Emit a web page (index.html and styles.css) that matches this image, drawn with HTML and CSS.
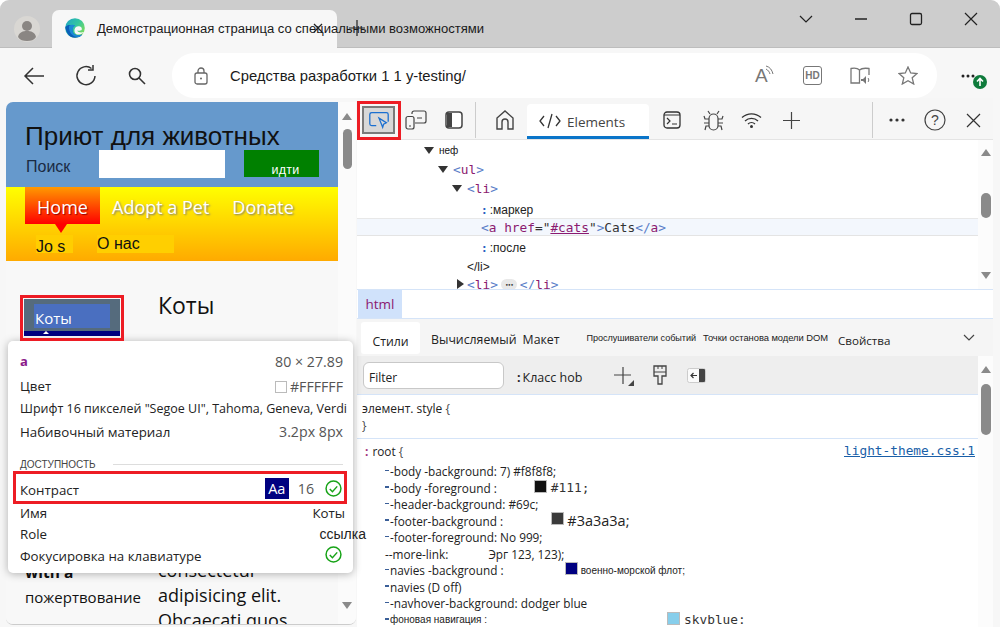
FILE: index.html
```html
<!DOCTYPE html>
<html lang="ru">
<head>
<meta charset="utf-8">
<title>Демонстрационная страница</title>
<link rel="stylesheet" href="styles.css">
</head>
<body>
<div class="window">
  <header class="tabstrip">
    <div class="avatar"><svg width="26" height="26" viewBox="0 0 26 26"><circle cx="13" cy="13" r="13" fill="#d9d7d3"/><circle cx="13" cy="10" r="5" fill="#8a8683"/><path d="M4 21c1-5 5-6 9-6s8 1 9 6c-2 3-5 4-9 4s-7-1-9-4z" fill="#8a8683"/></svg></div>
    <div class="tab">
      <svg class="edge" width="20" height="20" viewBox="0 0 20 20"><defs><linearGradient id="eg" x1="0" y1="0" x2="1" y2=".7"><stop offset="0" stop-color="#1fa3c8"/><stop offset=".55" stop-color="#33c6a0"/><stop offset="1" stop-color="#7fdc5a"/></linearGradient></defs><circle cx="10" cy="10" r="9.800" fill="url(#eg)"/><path d="M.3 9C1 14 3.500 19.800 10 19.800c3 0 5.500-1.200 7.200-3.300-4 1.500-9 .5-9.700-3.500C7 10 8 8.500 10 7.500 6 6.500 1.500 6.500.3 9z" fill="#0b5fb8"/><path d="M4 8c2-1.500 5-1.500 6-.5-1.500 1-2.500 2.500-2.500 5.500.7 4 5.700 5 9.700 3.500-1 1.200-2 2-3 2.500-6 1-11-5-10.200-11z" fill="#1c8ad6"/><path d="M9.500 11.500c.5-2.500 3-3.800 5.500-3 1.500.5 2.200 1.800 1.700 3.500-1 .8-3.500 1-4.700.5 1 2 4.500 2.500 7.500 1.200-.5 1-4.500 3.500-7.500 2.800-2-.5-3-3-2.500-5z" fill="#f7f7f7"/></svg>
      <span class="tab-title">Демонстрационная страница со специальными возможностями</span>
      <svg class="tab-x" width="12" height="12" viewBox="0 0 12 12"><path d="M2 2l8 8M10 2l-8 8" stroke="#222" stroke-width="1.300"/></svg>
    </div>
    <svg class="tab-plus" width="16" height="16" viewBox="0 0 16 16"><path d="M8 0v16M0 8h16" stroke="#222" stroke-width="1.200"/></svg>
    <div class="winctl">
      <svg class="ctl" width="14" height="14" viewBox="0 0 14 14"><path d="M1 4l6 6 6-6" fill="none" stroke="#222" stroke-width="1.200"/></svg>
      <svg class="ctl" width="14" height="14" viewBox="0 0 14 14"><path d="M1 7h12" stroke="#222" stroke-width="1.300"/></svg>
      <svg class="ctl" width="14" height="14" viewBox="0 0 14 14"><rect x="1.500" y="1.500" width="11" height="11" rx="1.500" fill="none" stroke="#222" stroke-width="1.300"/></svg>
      <svg class="ctl" width="14" height="14" viewBox="0 0 14 14"><path d="M1 1l12 12M13 1L1 13" stroke="#222" stroke-width="1.200"/></svg>
    </div>
  </header>

  <nav class="toolbar">
    <svg class="tb back" width="22" height="18" viewBox="0 0 22 18"><path d="M10 1L2 9l8 8M2 9h19" fill="none" stroke="#333" stroke-width="1.500"/></svg>
    <svg class="tb reload" width="22" height="22" viewBox="0 0 22 22"><path d="M16.500 3.500A9 9 0 1 0 20 11" fill="none" stroke="#333" stroke-width="1.500"/><path d="M13 5h5V0" fill="none" stroke="#333" stroke-width="1.500"/></svg>
    <svg class="tb search" width="18" height="18" viewBox="0 0 18 18"><circle cx="7" cy="7" r="5.500" fill="none" stroke="#333" stroke-width="1.600"/><path d="M11 11l6 6" stroke="#333" stroke-width="1.600"/></svg>
    <div class="address">
      <svg class="lock" width="14" height="18" viewBox="0 0 14 18"><rect x="1" y="6" width="12" height="11" rx="2" fill="none" stroke="#666" stroke-width="1.300"/><path d="M4 6V4a3 3 0 0 1 6 0v2" fill="none" stroke="#666" stroke-width="1.300"/><circle cx="7" cy="11.500" r="1" fill="#666"/></svg>
      <span class="url">Средства разработки 1 1 y-testing/</span>
      <div class="addr-icons">
        <span class="read"><span class="read-a">A</span><svg width="10" height="12" viewBox="0 0 10 12"><path d="M1 1c4 1 6 4 7 8M1 4c2 1 3.500 3 4 5" fill="none" stroke="#777" stroke-width="1"/></svg></span>
        <span class="hd">HD</span>
        <svg class="ai" width="20" height="18" viewBox="0 0 20 18"><path d="M9.500 3C8 1.500 4 1 1 1.500V16H9.500zM9.500 3C11 1.500 15 1 19 1.500V8" fill="none" stroke="#777" stroke-width="1.300"/><path d="M11 12h2l3-3v8l-3-3h-2z" fill="#777"/><path d="M18 11c1 1 1 3 0 4" fill="none" stroke="#777"/></svg>
        <svg class="ai" width="20" height="19" viewBox="0 0 20 19"><path d="M10 1l2.700 6 6.300.6-4.800 4.200 1.500 6.200-5.700-3.300L4.300 18l1.500-6.200L1 7.600 7.300 7z" fill="none" stroke="#777" stroke-width="1.300"/></svg>
      </div>
    </div>
    <div class="more"><svg class="dots" width="14" height="4" viewBox="0 0 14 4"><circle cx="2" cy="2" r="1.500" fill="#222"/><circle cx="7" cy="2" r="1.500" fill="#222"/><circle cx="12" cy="2" r="1.500" fill="#222"/></svg><span class="update"><svg width="12" height="12" viewBox="0 0 12 12"><path d="M6 10V3M3 5.500L6 2.500l3 3" fill="none" stroke="#fff" stroke-width="1.600"/></svg></span></div>
  </nav>

  <div class="content">
    <section class="page">
      <div class="page-view">
        <div class="site-header">
          <h1 class="site-title">Приют для животных</h1>
          <div class="search-row">
            <span class="search-label">Поиск</span>
            <span class="search-input"></span>
            <span class="search-btn">идти</span>
          </div>
        </div>
        <div class="site-nav">
          <div class="nav-main">
            <span class="nav-home">Home</span>
            <span class="nav-link nav-adopt">Adopt a Pet</span>
            <span class="nav-link">Donate</span>
          </div>
          <div class="nav-sub">
            <span class="sub-a">Jo s</span>
            <span class="sub-b">О нас</span>
          </div>
        </div>
        <div class="site-main">
          <aside class="side">
            <div class="cats-box"><span class="cats-link">Коты</span></div>
            <div class="side-low"><b class="bold-low">with a</b><span class="donate-low">пожертвование</span></div>
          </aside>
          <div class="article">
            <h2 class="article-h">Коты</h2>
            <p class="article-p">consectetur<br>adipisicing elit.<br>Obcaecati quos</p>
          </div>
        </div>
      </div>
      <div class="page-scroll">
        <span class="arr-up"></span>
        <span class="thumb"></span>
        <span class="arr-down"></span>
      </div>
    </section>

    <section class="devtools">
      <div class="dt-bar">
        <span class="dt-inspect"><svg width="24" height="22" viewBox="0 0 24 22"><path d="M9 17H4a2 2 0 0 1-2-2V5a2 2 0 0 1 2-2h16a2 2 0 0 1 2 2v8" fill="none" stroke="#1a6fd0" stroke-width="1.400"/><path d="M12 9l8 5-3 1.500L16 19z" fill="none" stroke="#1a6fd0" stroke-width="1.400"/></svg></span>
        <svg class="dt-i dt-device" width="22" height="20" viewBox="0 0 22 20"><path d="M7 4V3a2 2 0 0 1 2-2h10a2 2 0 0 1 2 2v8a2 2 0 0 1-2 2h-9" fill="none" stroke="#444" stroke-width="1.200"/><rect x="1" y="6.500" width="8" height="12.500" rx="2" fill="none" stroke="#444" stroke-width="1.200"/><path d="M12 8h5M4 16h2" stroke="#444"/></svg>
        <svg class="dt-i dt-dock" width="18" height="18" viewBox="0 0 18 18"><rect x="1" y="1" width="16" height="16" rx="3" fill="#fff" stroke="#444" stroke-width="1.500"/><path d="M2 2h5v14H2z" fill="#444"/></svg>
        <span class="dt-sep"></span>
        <svg class="dt-i dt-home" width="20" height="20" viewBox="0 0 20 20"><path d="M2 19V8l8-7 8 7v11h-5v-7a3 3 0 0 0-6 0v7z" fill="none" stroke="#444" stroke-width="1.400"/></svg>
        <div class="dt-tab">
          <svg width="22" height="16" viewBox="0 0 22 16"><path d="M5 3L1 8l4 5M17 3l4 5-4 5M13 1L9 15" fill="none" stroke="#333" stroke-width="1.300"/></svg>
          <span class="dt-tab-label">Elements</span>
        </div>
        <svg class="dt-i dt-console" width="18" height="18" viewBox="0 0 18 18"><rect x="1" y="1" width="16" height="16" rx="3" fill="none" stroke="#333" stroke-width="1.300"/><path d="M1 4h16" stroke="#333"/><path d="M4 7l3 3-3 3M9 13h5" fill="none" stroke="#333" stroke-width="1.200"/></svg>
        <svg class="dt-i dt-bug" width="21" height="21" viewBox="0 0 21 21"><rect x="6" y="4" width="9" height="16" rx="4.500" fill="none" stroke="#444" stroke-width="1.200"/><path d="M6 9H2L1 6M15 9h4l1-3M6 13H1M15 13h5M6 16H3l-1 4M15 16h3l1 4M7 4L5 1M14 4l2-3" fill="none" stroke="#444" stroke-width="1.200"/></svg>
        <svg class="dt-i dt-wifi" width="21" height="16" viewBox="0 0 21 16"><path d="M1 5.500a14 14 0 0 1 19 0M4 9a9.500 9.500 0 0 1 13 0M7 12a5 5 0 0 1 7 0" fill="none" stroke="#333" stroke-width="1.300"/><circle cx="10.500" cy="14.500" r="1.500" fill="#333"/></svg>
        <svg class="dt-i dt-plus" width="17" height="17" viewBox="0 0 17 17"><path d="M8.500 0v17M0 8.500h17" stroke="#444" stroke-width="1.200"/></svg>
        <span class="dt-sep dt-sep-r"></span>
        <svg class="dt-i dt-dots" width="16" height="4" viewBox="0 0 16 4"><circle cx="2" cy="2" r="1.600" fill="#333"/><circle cx="8" cy="2" r="1.600" fill="#333"/><circle cx="14" cy="2" r="1.600" fill="#333"/></svg>
        <svg class="dt-i dt-help" width="22" height="22" viewBox="0 0 22 22"><circle cx="11" cy="11" r="10" fill="none" stroke="#444" stroke-width="1.200"/><text class="help-q" x="11" y="16" text-anchor="middle">?</text></svg>
        <svg class="dt-i dt-close" width="15" height="15" viewBox="0 0 15 15"><path d="M1 1l13 13M14 1L1 14" stroke="#333" stroke-width="1.200"/></svg>
      </div>

      <div class="dom-pane">
        <div class="dom-tree">
          <div class="dom-row r-nef"><i class="tri-d"></i><span class="ru-small">неф</span></div>
          <div class="dom-row r-ul"><i class="tri-d"></i><span class="br">&lt;</span><span class="tg">ul</span><span class="br">&gt;</span></div>
          <div class="dom-row r-li"><i class="tri-d"></i><span class="br">&lt;</span><span class="tg">li</span><span class="br">&gt;</span></div>
          <div class="dom-row r-mark"><span class="pseudo">:</span><span class="ru">:маркер</span></div>
          <div class="dom-row r-a"><span class="br">&lt;</span><span class="tg">a </span><span class="at">href</span><span class="pl">="</span><span class="lnk">#cats</span><span class="pl">"</span><span class="br">&gt;</span><span class="pl">Cats</span><span class="br">&lt;/</span><span class="tg">a</span><span class="br">&gt;</span></div>
          <div class="dom-row r-after"><span class="pseudo">:</span><span class="ru">:после</span></div>
          <div class="dom-row r-cli"><span class="ru">&lt;/li&gt;</span></div>
          <div class="dom-row r-li2"><i class="tri-r"></i><span class="br">&lt;</span><span class="tg">li</span><span class="br">&gt;</span><span class="ell">•••</span><span class="br">&lt;/</span><span class="tg">li</span><span class="br">&gt;</span></div>
        </div>
        <div class="sb sb-dom"><span class="arr-up"></span><span class="sb-thumb"></span><span class="arr-down"></span></div>
      </div>

      <div class="crumbs"><span class="crumb">html</span></div>

      <div class="subtabs">
        <span class="st st-active">Стили</span>
        <span class="st st-comp">Вычисляемый</span>
        <span class="st st-lay">Макет</span>
        <span class="st-s st-ev">Прослушиватели событий</span>
        <span class="st-s st-dom">Точки останова модели DOM</span>
        <span class="st st-prop">Свойства</span>
        <svg class="st-chev" width="12" height="8" viewBox="0 0 12 8"><path d="M1 1l5 5 5-5" fill="none" stroke="#444" stroke-width="1.200"/></svg>
      </div>

      <div class="styles-pane">
        <div class="styles-main">
          <div class="filter-row">
            <span class="filter">Filter</span>
            <span class="hov"><b class="hov-dots">:</b>Класс hob</span>
            <svg class="f-plus" width="20" height="21" viewBox="0 0 20 21"><path d="M9 1v17M0 9h17" stroke="#444" stroke-width="1.200"/><path d="M20 14v6h-6z" fill="#444"/></svg>
            <svg class="f-brush" width="14" height="20" viewBox="0 0 14 20"><path d="M1 1h12v10H9v8H5v-8H1z" fill="none" stroke="#444" stroke-width="1.300"/><path d="M1 7h12M5 1v3M9 1v3" stroke="#444"/></svg>
            <svg class="f-side" width="19" height="15" viewBox="0 0 19 15"><rect x=".5" y=".5" width="18" height="14" rx="2" fill="#fafafa" stroke="#ccc"/><path d="M12 1h5a1 1 0 0 1 1 1v11a1 1 0 0 1-1 1h-5z" fill="#444"/><path d="M10 7.500H4M6.500 5L4 7.500 6.500 10" fill="none" stroke="#333" stroke-width="1.200"/></svg>
          </div>
          <div class="rule-el">
            <div>элемент. style <span class="brace">{</span></div>
            <div class="brace">}</div>
          </div>
          <div class="rule-root">
            <div class="rule-head"><span class="root-sel"><b class="root-dots">:</b>root <span class="brace">{</span></span><a class="src">light-theme.css:1</a></div>
            <div class="pr p1"><i class="d"></i>-body -background: 7) #f8f8f8;</div>
            <div class="pr p2"><i class="d"></i>-body -foreground : <span class="sw sw-a"></span><span class="mono">#111;</span></div>
            <div class="pr p3"><i class="d"></i>-header-background: #69c;</div>
            <div class="pr p4"><i class="d"></i>-footer-background : <span class="sw sw-b"></span><span class="big">#3a3a3a;</span></div>
            <div class="pr p5"><i class="d"></i>-footer-foreground: No 999;</div>
            <div class="pr p6">--more-link: <span class="erg">Эрг 123, 123);</span></div>
            <div class="pr p7"><i class="d"></i>navies -background : <span class="sw sw-c"></span><span class="navy">военно-морской флот;</span></div>
            <div class="pr p8"><i class="d"></i>navies (D off)</div>
            <div class="pr p9"><i class="d"></i>-navhover-background: dodger blue</div>
            <div class="pr p10"><i class="d"></i><span class="fon">фоновая навигация :</span><span class="sw sw-d"></span><span class="mono">skvblue:</span></div>
          </div>
        </div>
        <div class="sb sb-styles"><span class="arr-up"></span><span class="sb-thumb2"></span></div>
      </div>
    </section>
  </div>

  <div class="tooltip">
    <div class="tt-row tt-first"><b class="tt-a">a</b><span class="tt-v tt-size">80 × 27.89</span></div>
    <div class="tt-row tt-color"><span>Цвет</span><span class="tt-v"><i class="tt-swatch"></i>#FFFFFF</span></div>
    <div class="tt-row tt-font"><span>Шрифт 16 пикселей "Segoe UI", Tahoma, Geneva, Verdi</span></div>
    <div class="tt-row tt-pad"><span>Набивочный материал</span><span class="tt-v">3.2px 8px</span></div>
    <div class="tt-sec"><span>ДОСТУПНОСТЬ</span><i></i></div>
    <div class="tt-row tt-contrast"><span>Контраст</span><span class="tt-cv"><span class="aa">Aa</span><span class="tt-v tt-16">16</span><svg class="ok" width="17" height="17" viewBox="0 0 16 16"><circle cx="8" cy="8" r="7" fill="none" stroke="#17a317" stroke-width="1.400"/><path d="M4.500 8.500l2.500 2.500 4.500-5" fill="none" stroke="#17a317" stroke-width="1.400"/></svg></span></div>
    <div class="tt-row tt-name"><span>Имя</span><span class="tt-dark">Коты</span></div>
    <div class="tt-row tt-role"><span>Role</span><span class="tt-link">ссылка</span></div>
    <div class="tt-row tt-key"><span>Фокусировка на клавиатуре</span><svg class="ok ok-up" width="17" height="17" viewBox="0 0 16 16"><circle cx="8" cy="8" r="7" fill="none" stroke="#17a317" stroke-width="1.400"/><path d="M4.500 8.500l2.500 2.500 4.500-5" fill="none" stroke="#17a317" stroke-width="1.400"/></svg></div>
  </div>

  <span class="hl hl-inspect"></span>
  <span class="hl hl-cats"></span>
  <span class="hl hl-contrast"></span>
</div>
</body>
</html>
```
FILE: styles.css
```css
* { box-sizing: border-box; }
html, body { margin: 0; height: 100%; background: #fff; overflow: hidden; }
body { font-family: "Liberation Sans", Arial, sans-serif; color: #111; }
i { display: block; font-style: normal; }

.window { position: relative; width: 1000px; height: 627px; background: #f7f7f7; border-radius: 9px 9px 0 0; overflow: hidden; display: flex; flex-direction: column; }

/* tab strip */
.tabstrip { height: 48px; flex: none; background: #cdcdcd; display: flex; align-items: flex-end; padding-left: 14px; border-bottom: 1px solid #bdbdbd; position: relative; }
.avatar { height: 26px; margin-bottom: 5px; }
.tab { width: 285px; height: 38px; margin: 0 0 -1px 12px; background: #f7f7f7; border-radius: 7px 7px 0 0; display: flex; align-items: center; padding: 0 0 2px 13px; }
.edge { flex: none; }
.tab-title { flex: none; width: 387px; margin-left: 12px; font-size: 13.050px; white-space: nowrap; color: #1a1a1a; margin-right: -172px; }
.tab-x { flex: none; }
.tab-plus { margin: 0 0 11px 12px; }
.winctl { margin-left: auto; padding: 0 22px 21px 0; display: flex; gap: 41px; }
.ctl { display: block; }

/* toolbar */
.toolbar { height: 50px; flex: none; background: #f7f7f7; display: flex; align-items: center; padding: 5px 0 0 23px; }
.tb { flex: none; }
.reload { margin-left: 30px; }
.search { margin-left: 31px; }
.address { width: 765px; height: 45px; margin-left: 26px; background: #fff; border-radius: 22px; display: flex; align-items: center; padding: 0 19px 0 22px; }
.lock { flex: none; }
.url { margin-left: 22px; font-size: 14.800px; color: #1a1a1a; white-space: nowrap; }
.addr-icons { margin-left: auto; display: flex; align-items: center; gap: 28px; }
.read { display: flex; width: 20px; color: #777; font-size: 19px; align-items: flex-start; }
.read-a { line-height: 20px; }
.read svg { margin: -1px 0 0 -3px; }
.hd { width: 19px; height: 19px; border: 1.500px solid #777; border-radius: 3px; font-size: 10px; font-weight: 700; color: #777; display: flex; align-items: center; justify-content: center; }
.ai { display: block; }
.more { position: relative; margin-left: 24px; width: 24px; height: 20px; display: flex; align-items: center; }
.dots { display: block; }
.update { position: absolute; left: 12px; top: 9px; width: 14px; height: 14px; border-radius: 50%; background: #0f7b3c; display: flex; align-items: center; justify-content: center; }

/* content */
.content { flex: 1; min-height: 0; display: flex; background: #f7f7f7; }
.page { width: 350px; margin: 4px 0 2px 6px; display: flex; border-radius: 7px 0 7px 7px; overflow: hidden; background: #f8f8f8; border-bottom: 1px solid #ccc; flex: none; }
.page-view { width: 332px; flex: none; overflow: hidden; }
.site-header { height: 85px; background: #69c; padding: 19px 0 0 19px; }
.site-title { margin: 0; font-weight: 400; font-size: 26px; line-height: 30px; color: #111; }
.search-row { display: flex; align-items: flex-start; margin-top: -1px; }
.search-label { width: 73px; margin: 8px 0 0 1px; font-size: 16px; color: #1a2b44; }
.search-input { width: 126px; height: 28px; background: #fff; }
.search-btn { width: 75px; height: 27px; margin-left: 19px; background: #008000; color: #fff; font-size: 12.500px; line-height: 14px; display: flex; align-items: flex-end; justify-content: center; padding: 0 0 0 8px; letter-spacing: .3px; }
.site-nav { height: 74px; background: linear-gradient(#ff0, #fa0); padding-left: 19px; }
.nav-main { display: flex; height: 37px; font-family: "Open Sans", sans-serif; font-size: 18px; }
.nav-home { position: relative; width: 75px; height: 37px; background: linear-gradient(#f90, #f00); color: #fff; text-align: center; line-height: 40px; text-shadow: 1px 1px 1px #900; }
.nav-home::after { content: ""; position: absolute; left: 30px; top: 37px; border: 6px solid transparent; border-top: 9px solid #f00; border-bottom: 0; }
.nav-link { color: #fff; line-height: 40px; text-shadow: 1px 1px 2px #777; margin-left: 23px; white-space: nowrap; }
.nav-adopt { margin-left: 12px; }
.nav-sub { display: flex; font-size: 16px; padding: 11px 0 0 11px; }
.sub-a { width: 37px; height: 18px; background: #ffce00; line-height: 23px; color: #111; }
.sub-b { width: 77px; height: 18px; margin-left: 24px; background: #ffcf00; line-height: 18px; color: #111; }
.site-main { display: flex; padding-left: 19px; background: #f8f8f8; }
.side { width: 133px; flex: none; }
.cats-box { position: relative; width: 96px; height: 37px; margin: 38px 0 0 -1px; background: linear-gradient(#556b7d 32px, #000080 32px); padding: 5px 0 0 10px; }
.cats-box::after { content: ""; position: absolute; left: 19px; top: 32px; border: 3px solid transparent; border-top: 0; border-bottom: 3px solid #fff; }
.cats-link { display: block; width: 76px; height: 24px; padding-left: 1px; background: #4a6fc0; color: #fff; font-family: "Open Sans", sans-serif; font-size: 15px; line-height: 28px; }
.side-low { margin-top: 226px; font-family: "Open Sans", sans-serif; font-size: 15.500px; }
.bold-low { display: block; height: 21px; line-height: 21px; }
.donate-low { display: block; line-height: 28px; white-space: nowrap; font-size: 15px; }
.article { flex: 1; }
.article-h { margin: 29px 0 0; font-family: "Open Sans", sans-serif; font-weight: 400; font-size: 23px; line-height: 30px; }
.article-p { margin: 238px 0 0; font-family: "Open Sans", sans-serif; font-size: 18px; line-height: 25px; white-space: nowrap; }
.page-scroll { flex: 1; background: #fbfbfb; display: flex; flex-direction: column; align-items: center; padding-top: 11px; position: relative; }
.arr-up { display: block; width: 0; height: 0; border: 5px solid transparent; border-top: 0; border-bottom: 7px solid #8a8a8a; }
.arr-down { display: block; width: 0; height: 0; border: 5px solid transparent; border-bottom: 0; border-top: 7px solid #8a8a8a; }
.thumb { width: 9px; height: 40px; margin-top: 9px; background: #8a8a8a; border-radius: 5px; }
.page-scroll .arr-down { margin-top: auto; margin-bottom: 15px; }

/* devtools */
.devtools { width: 636px; flex: none; margin-left: 1px; display: flex; flex-direction: column; background: #fff; }
.dt-bar { height: 42px; flex: none; background: #f6f6f6; display: flex; align-items: center; position: relative; border-bottom: 1px solid #e4e4e4; }
.dt-inspect { width: 33px; height: 28px; margin: 3px 0 0 5px; background: #d8d8d8; border: 2px solid #7a7a7a; display: flex; align-items: center; justify-content: center; flex: none; }
.dt-inspect svg { transform: scale(.92); }
.dt-i { flex: none; display: block; }
.dt-device { margin: 3px 0 0 10px; }
.dt-dock { margin: 3px 0 0 18px; }
.dt-sep { width: 1px; height: 36px; background: #ccc; margin: 3px 0 0 12px; flex: none; }
.dt-home { margin: 3px 0 0 19px; }
.dt-tab { width: 122px; height: 35px; margin: 5px 0 0 12px; background: #fff; border-bottom: 3px solid #0a75c9; border-radius: 4px 4px 0 0; display: flex; align-items: center; padding: 2px 0 0 12px; font-family: "Open Sans", sans-serif; font-size: 13.500px; color: #444; flex: none; gap: 6px; }
.dt-tab-label { margin-top: 2px; }
.dt-console { margin: 3px 0 0 14px; }
.dt-bug { margin: 3px 0 0 22px; }
.dt-wifi { margin: 3px 0 0 17px; }
.dt-plus { margin: 3px 0 0 21px; }
.dt-sep-r { margin-left: 72px; }
.dt-dots { margin: 3px 0 0 16px; }
.dt-help { margin: 3px 0 0 19px; }
.help-q { font-family: "Liberation Sans", sans-serif; font-size: 14px; fill: #444; }
.dt-close { margin: 3px 0 0 20px; }

.dom-pane { height: 150px; flex: none; display: flex; background: #fff; border-bottom: 1px solid #d5e4f8; }
.dom-tree { flex: 1; min-width: 0; overflow: hidden; }
.dom-row { display: flex; align-items: center; font-family: "DejaVu Sans Mono", monospace; font-size: 12.800px; white-space: pre; }
.r-nef { height: 20px; padding: 0 0 0 67px; }
.r-ul { height: 19px; padding-left: 81px; }
.r-li { height: 19px; padding-left: 95px; }
.r-mark { height: 20px; padding: 4px 0 0 124px; }
.r-a { height: 18px; padding-left: 124px; background: #f3f7fd; border-top: 1px solid #e8e8e8; border-bottom: 1px solid #e4e4e4; }
.r-after { height: 22px; padding: 2px 0 0 124px; }
.r-cli { height: 17px; padding: 0 0 0 110px; }
.r-li2 { height: 18px; padding-left: 100px; }
.tri-d { width: 0; height: 0; border: 5px solid transparent; border-top: 7px solid #333; border-bottom: 0; margin-right: 5px; }
.tri-r { width: 0; height: 0; border: 5px solid transparent; border-left: 7px solid #333; border-right: 0; margin-right: 3px; }
.ru-small { font-family: "Liberation Sans", sans-serif; font-size: 10px; }
.ru { font-family: "Liberation Sans", sans-serif; font-size: 12px; color: #222; }
.pseudo { color: #2a5fc0; font-weight: 700; font-size: 11px; margin-right: 2px; }
.br { color: #5a7ec8; }
.tg, .at { color: #8b1a70; }
.pl { color: #333; }
.lnk { color: #8b1a70; text-decoration: underline; }
.ell { width: 16px; height: 11px; margin: 0 3px 0 3px; background: #e8e8e8; border-radius: 6px; font-size: 6px; color: #333; text-align: center; line-height: 11px; letter-spacing: -1px; }

.sb { width: 15px; flex: none; display: flex; flex-direction: column; align-items: center; background: #fcfcfc; }
.sb-dom { padding: 9px 0 10px; }
.sb-dom .arr-down { margin-top: auto; }
.sb-thumb { width: 10px; height: 25px; margin-top: 37px; background: #8a8a8a; border-radius: 5px; }

.crumbs { height: 29px; flex: none; background: #fff; border-bottom: 1px solid #d5e4f8; padding-left: 1px; }
.crumb { display: block; width: 44px; height: 28px; background: #d0e2fb; color: #8b1a70; font-family: "Open Sans", sans-serif; font-size: 13.500px; line-height: 28px; text-align: center; }

.subtabs { height: 37px; flex: none; background: #f5f5f5; display: flex; align-items: center; white-space: nowrap; position: relative; padding-left: 4px; }
.st { font-family: "Open Sans", sans-serif; font-size: 12.300px; color: #222; display: block; padding-top: 3px; }
.st-active { width: 59px; height: 32px; background: #fff; line-height: 33px; text-align: center; border-radius: 3px; }
.st-comp { margin-left: 11px; }
.st-lay { margin-left: 6px; }
.st-s { font-family: "Liberation Sans", sans-serif; font-size: 9.100px; color: #222; margin-left: 27px; letter-spacing: -.05px; }
.st-dom { margin-left: 7px; font-size: 9.400px; }
.st-prop { margin-left: 10px; font-size: 11.600px; padding-top: 5px; }
.st-chev { margin-left: 73px; }

.styles-pane { flex: 1; min-height: 0; display: flex; overflow: hidden; }
.styles-main { flex: 1; min-width: 0; }
.filter-row { height: 39px; background: #eee; display: flex; align-items: center; border-bottom: 1px solid #d5e4f8; padding-left: 6px; }
.filter { width: 141px; height: 27px; background: #fff; border: 1px solid #c8c8c8; border-radius: 6px; font-family: "Open Sans", sans-serif; font-size: 12px; line-height: 30px; padding-left: 5px; color: #222; }
.hov { margin: 5px 0 0 13px; font-family: "Open Sans", sans-serif; font-size: 12.500px; color: #222; }
.hov-dots { margin-right: 2px; }
.f-plus { margin: 3px 0 0 32px; }
.f-brush { margin-left: 19px; }
.f-side { margin-left: 20px; }
.rule-el { height: 44px; padding: 5px 0 0 5px; font-family: "Open Sans", sans-serif; font-size: 12px; line-height: 17px; color: #222; border-bottom: 1px solid #d5e4f8; }
.brace { color: #4a4a4a; }
.rule-root { font-family: "Open Sans", sans-serif; font-size: 11.800px; color: #222; }
.rule-head { height: 23px; display: flex; align-items: center; justify-content: space-between; padding: 0 3px 0 8px; margin-bottom: 1px; }
.root-dots { color: #a0307a; margin-right: 4px; }
.src { font-family: "DejaVu Sans Mono", monospace; font-size: 12.800px; color: #1a5fa8; text-decoration: underline; }
.pr { display: flex; align-items: center; height: 16.500px; padding-left: 28px; white-space: pre; }
.d { width: 4px; height: 1.500px; background: #3a5f98; margin-right: 1px; position: relative; top: -1px; }
.sw { display: block; width: 13px; height: 13px; border: 1px solid #bbb; flex: none; position: relative; top: -1px; }
.sw-a { background: #111; margin: 0 4px 0 34px; }
.sw-b { background: #3a3a3a; margin: 0 3px 0 45px; top: -2px; }
.sw-c { background: #000080; margin: 0 3px 0 58px; top: -2px; }
.sw-d { background: #87ceeb; margin: 0 4px 0 180px; }
.mono { font-family: "DejaVu Sans Mono", monospace; font-size: 12.800px; color: #333; }
.big { font-size: 14.500px; }
.erg { margin-left: 37px; }
.navy { font-family: "Liberation Sans", sans-serif; font-size: 10px; }
.fon { font-family: "Liberation Sans", sans-serif; font-size: 10px; }
.sb-styles { padding-top: 10px; }
.sb-thumb2 { width: 10px; height: 51px; margin-top: 11px; background: #8a8a8a; border-radius: 5px; }

/* tooltip */
.tooltip { position: absolute; left: 8px; top: 341px; width: 345px; height: 232px; background: #fff; border-radius: 5px; box-shadow: 0 1px 8px rgba(0,0,0,.3); padding: 0 8px 0 12px; font-family: "Open Sans", sans-serif; font-size: 13.300px; color: #222; }
.tt-row { display: flex; justify-content: space-between; align-items: center; white-space: nowrap; }
.tt-first { height: 24px; margin-top: 8px; }
.tt-a { color: #8b1a8b; font-size: 13px; }
.tt-v { color: #555; font-size: 14.200px; margin-right: 2px; }
.tt-color { height: 22px; margin-top: 2px; }
.tt-swatch { display: inline-block; width: 12px; height: 12px; border: 1px solid #bbb; margin-right: 3px; position: relative; top: 1px; }
.tt-font { height: 23px; font-size: 12.500px; overflow: visible; }
.tt-pad { height: 23px; }
.tt-sec { display: flex; align-items: center; gap: 17px; margin-top: 10px; height: 20px; font-size: 10px; color: #444; font-family: "Liberation Sans", sans-serif; padding-top: 3px; }
.tt-sec i { flex: 1; height: 1px; background: #ddd; margin-right: 2px; }
.tt-contrast { height: 28px; margin-top: 3px; }
.tt-cv { display: flex; align-items: center; margin-bottom: 4px; padding-right: 3px; }
.aa { width: 24px; height: 21px; background: #000080; color: #fff; text-align: center; line-height: 21px; font-size: 14.500px; }
.tt-16 { margin: 0 11px 0 9px; }
.tt-name { height: 20px; margin-top: -1px; }
.tt-role { height: 22px; }
.tt-key { height: 22px; padding-right: 3px; }
.tt-dark { color: #222; }
.tt-link { font-family: "Liberation Sans", sans-serif; font-size: 14px; margin-right: -21px; }
.ok { display: block; flex: none; }
.ok-up { margin-bottom: 4px; }

/* red highlights */
.hl { position: absolute; border: 3px solid #ed1c24; display: block; pointer-events: none; }
.hl-inspect { left: 357px; top: 101px; width: 44px; height: 39px; }
.hl-cats { left: 20px; top: 295px; width: 104px; height: 46px; }
.hl-contrast { left: 13px; top: 471px; width: 334px; height: 33px; }
```
